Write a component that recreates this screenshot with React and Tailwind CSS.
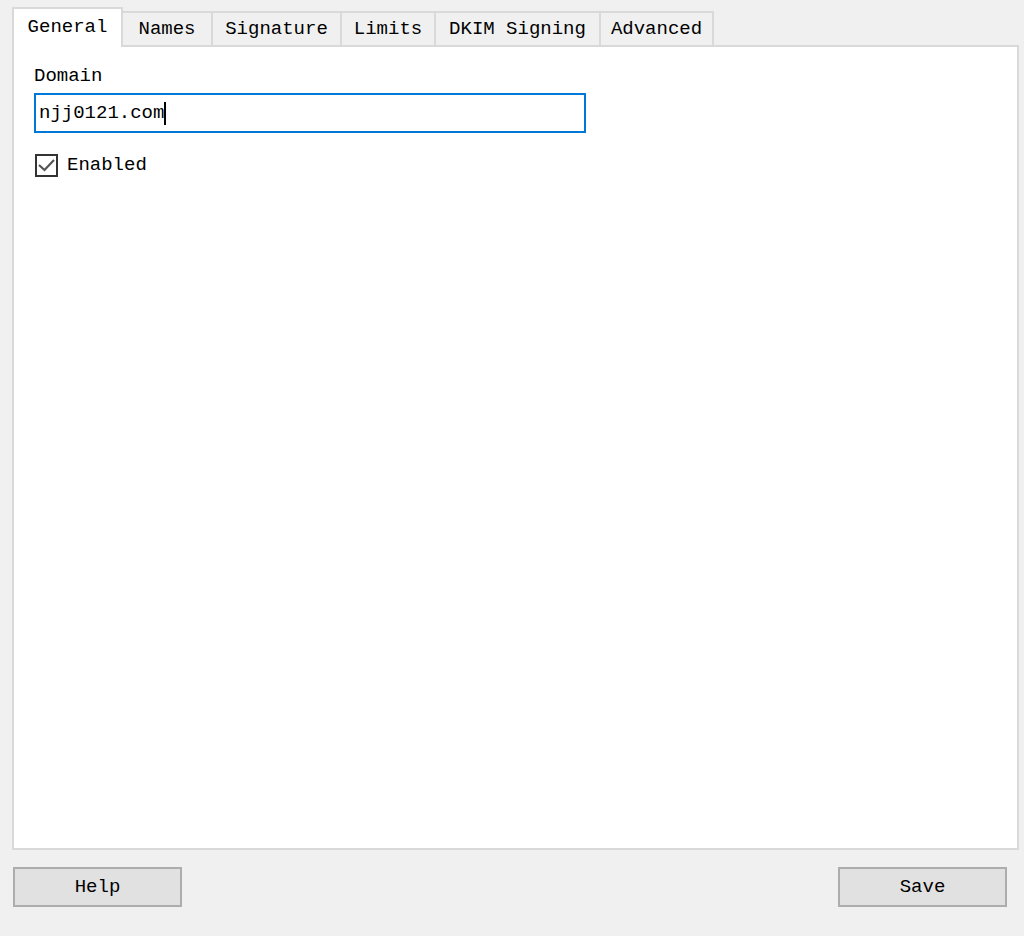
import React from "react";

// Domain settings dialog, "General" tab selected.
const TABS = [
  { label: "General", w: "w-[111px]" },
  { label: "Names", w: "w-[90px]" },
  { label: "Signature", w: "w-[129px]" },
  { label: "Limits", w: "w-[94px]" },
  { label: "DKIM Signing", w: "w-[165px]" },
  { label: "Advanced", w: "w-[113px]" },
];

const font = { fontFamily: '"Liberation Mono", "DejaVu Sans Mono", monospace' };

function Tab({ label, w, active }) {
  if (active) {
    return (
      <div
        className={
          "relative z-10 -mb-[2px] h-[40px] flex items-start justify-center pt-[6px] " +
          "bg-white border-2 border-b-0 border-[#d9d9d9] " +
          w
        }
      >
        <span className="text-[19px] leading-[24px] text-black">{label}</span>
      </div>
    );
  }
  return (
    <div
      className={
        "h-[34px] flex items-center justify-center bg-[#f0f0f0] " +
        "border-t-2 border-r-2 border-[#d9d9d9] " +
        w
      }
    >
      <span className="text-[19px] leading-[24px] text-black">{label}</span>
    </div>
  );
}

function Checkbox({ checked }) {
  return (
    <span className="w-[23px] h-[23px] border-2 border-[#333] bg-white flex items-center justify-center">
      {checked && (
        <svg viewBox="0 0 19 19" className="w-[19px] h-[19px]" fill="none" aria-hidden="true">
          <path d="M2 9 L7.5 14 L17 4" stroke="#555" strokeWidth="2.2" />
        </svg>
      )}
    </span>
  );
}

function Button({ children }) {
  return (
    <button
      type="button"
      className="w-[169px] h-[40px] bg-[#e1e1e1] border-2 border-[#adadad] text-[19px] leading-none text-black"
    >
      {children}
    </button>
  );
}

export default function App() {
  return (
    <div className="w-[1024px] h-[936px] bg-[#f0f0f0] pt-[7px] pl-[12px] pr-[5px]" style={font}>
      {/* ---- tab strip ---- */}
      <div className="flex items-end h-[38px]">
        {TABS.map((t, i) => (
          <Tab key={t.label} label={t.label} w={t.w} active={i === 0} />
        ))}
      </div>

      {/* ---- panel ---- */}
      <div className="h-[805px] bg-white border-2 border-[#d9d9d9] pl-[20px] pt-[17px]">
        <div className="text-[19px] leading-[24px] text-black">Domain</div>
        <div className="mt-[5px] w-[552px] h-[40px] border-2 border-[#0078d7] flex items-center pl-[3px]">
          <span className="text-[19px] leading-[24px] text-black">njj0121.com</span>
          <span className="w-[2px] h-[23px] bg-black" />
        </div>
        <label className="mt-[20px] flex items-center gap-[9px] pl-[1px]">
          <Checkbox checked />
          <span className="text-[19px] leading-[24px] text-black">Enabled</span>
        </label>
      </div>

      {/* ---- buttons ---- */}
      <div className="mt-[17px] flex justify-between pl-[1px] pr-[12px]">
        <Button>Help</Button>
        <Button>Save</Button>
      </div>
    </div>
  );
}
